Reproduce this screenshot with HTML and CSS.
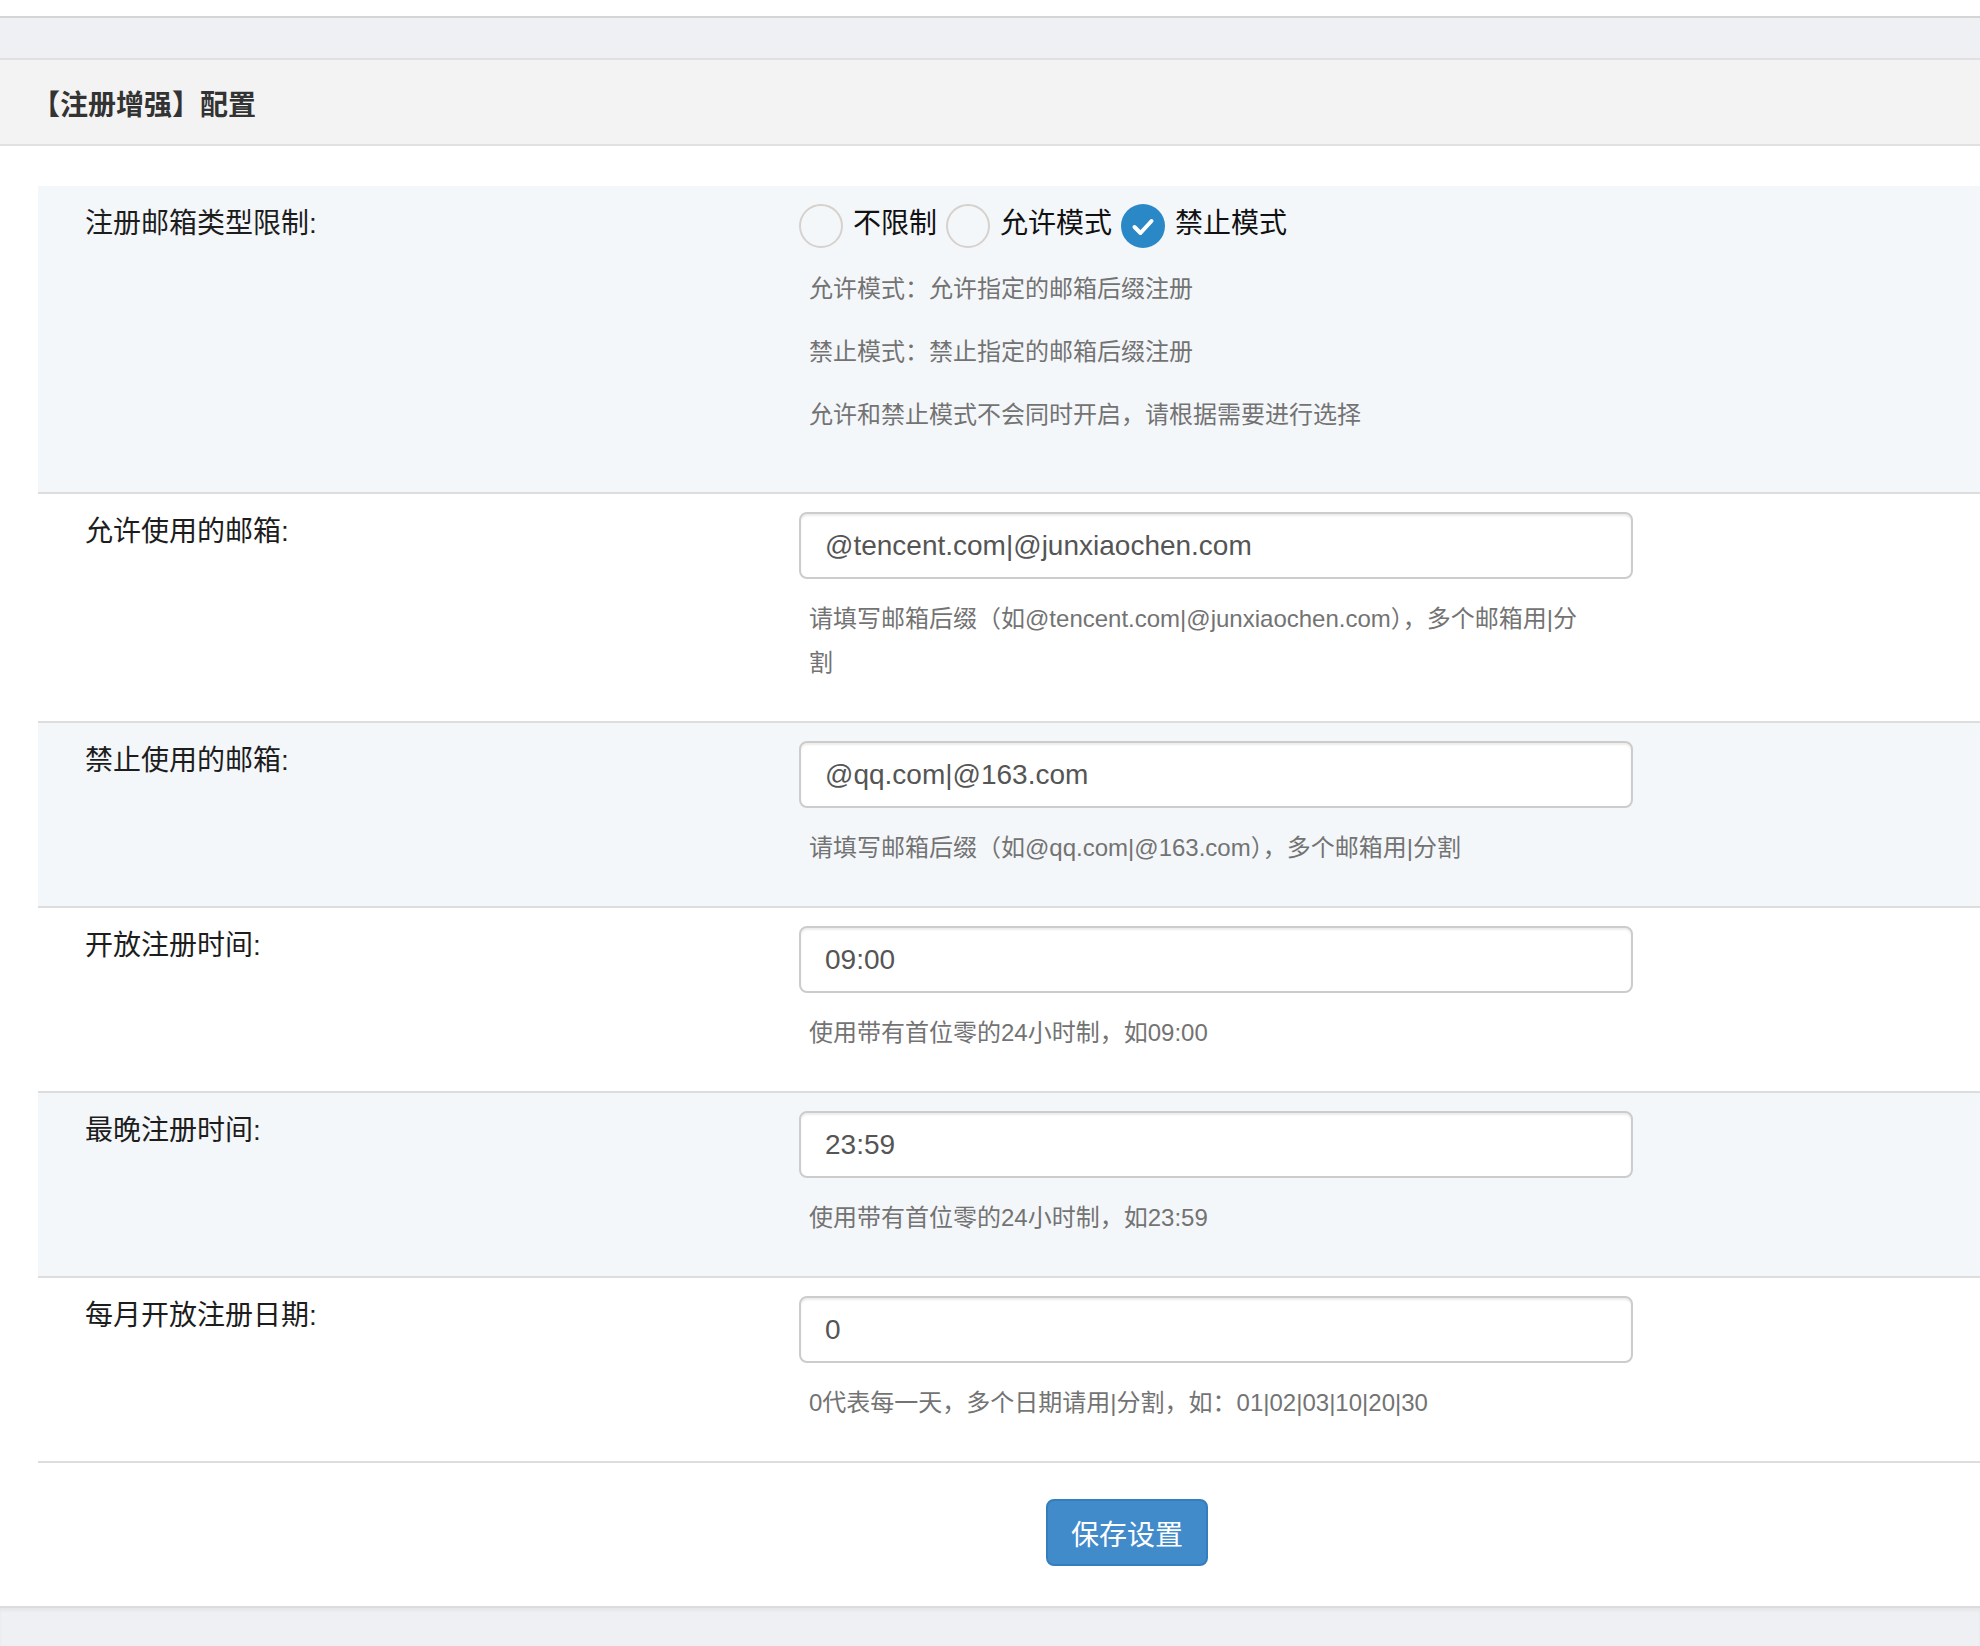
FILE: index.html
```html
<!DOCTYPE html>
<html lang="zh-CN">
<head>
<meta charset="utf-8">
<title>【注册增强】配置</title>
<link rel="stylesheet" href="styles.css">
</head>
<body>
<div class="topbar"></div>
<div class="subbar"></div>
<div class="panel">
  <div class="panel-heading">【注册增强】配置</div>
  <div class="panel-body">
    <form class="form">
      <div class="row alt">
        <div class="label">注册邮箱类型限制:</div>
        <div class="control">
          <div class="radios">
            <span class="opt"><span class="radio"></span><span class="opt-text">不限制</span></span>
            <span class="opt"><span class="radio"></span><span class="opt-text">允许模式</span></span>
            <span class="opt"><span class="radio checked"><svg viewBox="0 0 44 44" width="44" height="44"><polyline points="13.5,23 19.5,29 30.5,17" fill="none" stroke="#fff" stroke-width="4" stroke-linecap="round" stroke-linejoin="round"/></svg></span><span class="opt-text">禁止模式</span></span>
          </div>
          <p class="note">允许模式：允许指定的邮箱后缀注册</p>
          <p class="note">禁止模式：禁止指定的邮箱后缀注册</p>
          <p class="note">允许和禁止模式不会同时开启，请根据需要进行选择</p>
        </div>
      </div>
      <div class="row">
        <div class="label">允许使用的邮箱:</div>
        <div class="control">
          <div class="input">@tencent.com|@junxiaochen.com</div>
          <div class="help">请填写邮箱后缀（如@tencent.com|@junxiaochen.com），多个邮箱用|分割</div>
        </div>
      </div>
      <div class="row alt">
        <div class="label">禁止使用的邮箱:</div>
        <div class="control">
          <div class="input">@qq.com|@163.com</div>
          <div class="help">请填写邮箱后缀（如@qq.com|@163.com），多个邮箱用|分割</div>
        </div>
      </div>
      <div class="row">
        <div class="label">开放注册时间:</div>
        <div class="control">
          <div class="input">09:00</div>
          <div class="help">使用带有首位零的24小时制，如09:00</div>
        </div>
      </div>
      <div class="row alt">
        <div class="label">最晚注册时间:</div>
        <div class="control">
          <div class="input">23:59</div>
          <div class="help">使用带有首位零的24小时制，如23:59</div>
        </div>
      </div>
      <div class="row">
        <div class="label">每月开放注册日期:</div>
        <div class="control">
          <div class="input">0</div>
          <div class="help">0代表每一天，多个日期请用|分割，如：01|02|03|10|20|30</div>
        </div>
      </div>
      <div class="actions">
        <button type="button" class="btn">保存设置</button>
      </div>
    </form>
  </div>
</div>
<div class="footer"></div>
</body>
</html>
```

FILE: styles.css
```css
* { box-sizing: border-box; }
html, body { margin: 0; padding: 0; }
body {
  background: #ffffff;
  font-family: "Liberation Sans", "Noto Sans CJK SC", sans-serif;
  color: #1a1a1a;
  width: 1980px;
  min-height: 1646px;
  overflow: hidden;
}
.topbar {
  height: 18px;
  background: #ffffff;
  border-bottom: 2px solid #d4d5d4;
}
.subbar {
  height: 42px;
  background: #eef0f4;
  border-bottom: 2px solid #e0e0e3;
}
.panel-heading {
  height: 86px;
  background: #f3f3f3;
  border-bottom: 2px solid #e1e1e1;
  padding-left: 32px;
  padding-top: 2px;
  display: flex;
  align-items: center;
  font-size: 28px;
  font-weight: 700;
  color: #333333;
}
.panel-body {
  padding: 40px 0 0 38px;
}
.form { margin: 0; }
.row {
  display: grid;
  grid-template-columns: 714px 834px;
  padding: 18px 0 36px 47px;
  border-bottom: 2px solid #dddddd;
  background: #ffffff;
}
.row.alt { background: #f4f7fa; }
.label {
  font-size: 28px;
  line-height: 40px;
  color: #1d1d1d;
}
.control { min-width: 0; }
.radios {
  display: flex;
  align-items: center;
  height: 44px;
}
.opt {
  display: flex;
  align-items: center;
  margin-right: 9px;
}
.radio {
  width: 44px;
  height: 44px;
  border-radius: 50%;
  border: 2px solid #d6d1cc;
  display: inline-block;
  flex: none;
}
.radio.checked {
  border: none;
  background: #2a88c7;
}
.radio.checked svg { display: block; }
.opt-text {
  font-size: 28px;
  line-height: 40px;
  padding-bottom: 4px;
  color: #111111;
  margin-left: 10px;
}
.note {
  margin: 19px 0;
  padding-left: 10px;
  font-size: 24px;
  line-height: 44px;
  color: #737373;
}
.input {
  height: 67px;
  border: 2px solid #cccccc;
  border-radius: 8px;
  background: #ffffff;
  box-shadow: inset 0 2px 2px rgba(0,0,0,0.075);
  padding: 0 24px;
  font-size: 28px;
  line-height: 63px;
  color: #555555;
  white-space: nowrap;
}
.help {
  margin-top: 18px;
  padding: 0 32px 0 10px;
  font-size: 24px;
  line-height: 44px;
  color: #737373;
}
.actions {
  padding: 36px 0 40px 1008px;
}
.btn {
  display: block;
  width: 162px;
  height: 67px;
  background: #428bca;
  border: 2px solid #357ebd;
  border-radius: 8px;
  color: #ffffff;
  font-family: "Liberation Sans", "Noto Sans CJK SC", sans-serif;
  font-size: 28px;
  padding: 0;
}
.footer {
  height: 40px;
  background: #eef0f4;
  border-top: 2px solid #dcdcdc;
  box-shadow: inset 0 3px 3px rgba(0,0,0,0.04);
}
```
